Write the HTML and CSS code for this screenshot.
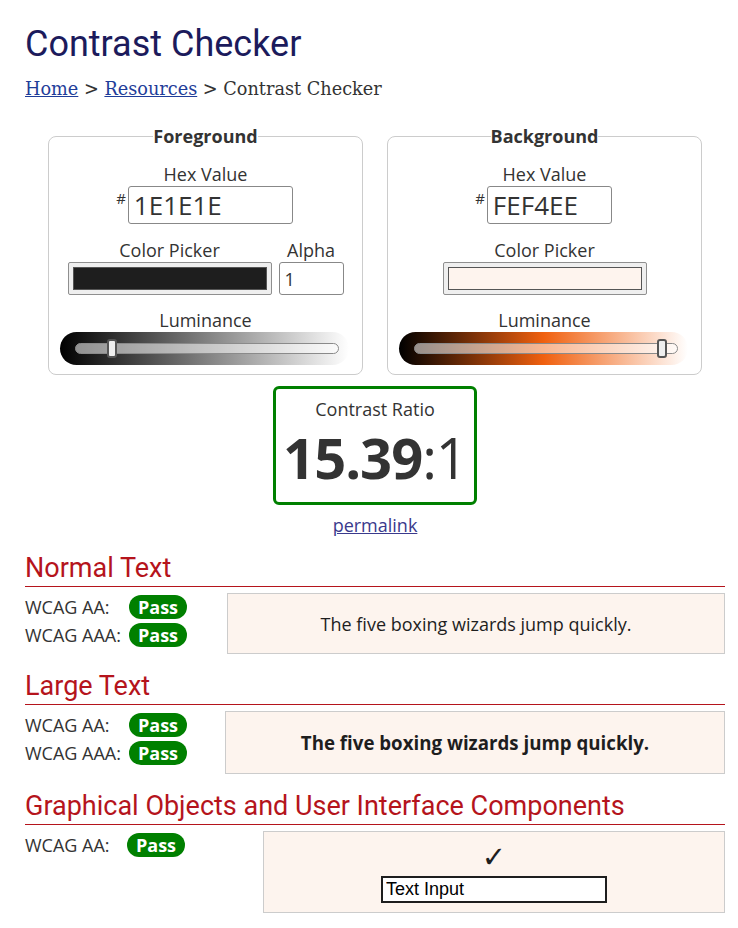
FILE: index.html
```html
<!DOCTYPE html>
<html lang="en">
<head>
<meta charset="utf-8">
<title>Contrast Checker</title>
<link rel="stylesheet" href="styles.css">
</head>
<body>
<main class="page">
  <h1 class="title">Contrast Checker</h1>
  <nav class="crumbs"><a href="#">Home</a> &gt; <a href="#">Resources</a> &gt; Contrast Checker</nav>

  <div class="pickers">
    <fieldset class="panel">
      <legend>Foreground</legend>
      <div class="lbl">Hex Value</div>
      <div class="hexrow"><span class="hash">#</span><input class="hex hex-fg" type="text" value="1E1E1E"></div>
      <div class="pickrow">
        <div class="col">
          <div class="lbl">Color Picker</div>
          <div class="swatch"><span class="swatch-in swatch-fg"></span></div>
        </div>
        <div class="col">
          <div class="lbl">Alpha</div>
          <input class="alpha" type="text" value="1">
        </div>
      </div>
      <div class="lbl">Luminance</div>
      <div class="lum lum-fg">
        <div class="track"><span class="thumb" style="left: 12%"></span></div>
      </div>
    </fieldset>

    <fieldset class="panel">
      <legend>Background</legend>
      <div class="lbl">Hex Value</div>
      <div class="hexrow"><span class="hash">#</span><input class="hex hex-bg" type="text" value="FEF4EE"></div>
      <div class="pickrow">
        <div class="col">
          <div class="lbl">Color Picker</div>
          <div class="swatch"><span class="swatch-in swatch-bg"></span></div>
        </div>
      </div>
      <div class="lbl">Luminance</div>
      <div class="lum lum-bg">
        <div class="track"><span class="thumb" style="left: 92.5%"></span></div>
      </div>
    </fieldset>
  </div>

  <div class="ratio-wrap">
    <div class="ratio">
      <div class="ratio-lbl">Contrast Ratio</div>
      <div class="ratio-val"><b>15.39</b>:1</div>
    </div>
    <a class="permalink" href="#">permalink</a>
  </div>

  <section class="result res-normal">
    <h2>Normal Text</h2>
    <div class="res-grid">
      <div class="checks">
        <div class="check"><span class="clabel">WCAG AA:</span><span class="pass">Pass</span></div>
        <div class="check"><span class="clabel">WCAG AAA:</span><span class="pass">Pass</span></div>
      </div>
      <div class="sample">The five boxing wizards jump quickly.</div>
    </div>
  </section>

  <section class="result res-large">
    <h2>Large Text</h2>
    <div class="res-grid">
      <div class="checks">
        <div class="check"><span class="clabel">WCAG AA:</span><span class="pass">Pass</span></div>
        <div class="check"><span class="clabel">WCAG AAA:</span><span class="pass">Pass</span></div>
      </div>
      <div class="sample sample-large">The five boxing wizards jump quickly.</div>
    </div>
  </section>

  <section class="result res-ui">
    <h2>Graphical Objects and User Interface Components</h2>
    <div class="res-grid">
      <div class="checks">
        <div class="check"><span class="clabel clabel-ui">WCAG AA:</span><span class="pass">Pass</span></div>
      </div>
      <div class="sample sample-ui">
        <span class="tick">&#10003;</span>
        <input class="demo-input" type="text" value="Text Input">
      </div>
    </div>
  </section>
</main>
</body>
</html>
```

FILE: styles.css
```css
* { box-sizing: border-box; }

body {
  margin: 0;
  background: #fff;
  color: #333;
  font-family: "Open Sans", "DejaVu Sans", sans-serif;
  font-size: 18px;
}

.page {
  width: 700px;
  margin-left: 25px;
  padding-top: 22px;
}

.title {
  margin: 0;
  font-family: Roboto, "Liberation Sans", sans-serif;
  font-weight: 400;
  font-size: 36px;
  line-height: 44px;
  color: #1c1b5c;
}

.crumbs {
  margin-top: 12px;
  font-family: "DejaVu Serif", "Liberation Serif", serif;
  font-size: 17.7px;
  line-height: 22px;
  color: #333;
}
.crumbs a { color: #1f3d99; }

.pickers {
  display: flex;
  justify-content: center;
  gap: 24px;
  margin-top: 25px;
}

.panel {
  width: 315px;
  margin: 0;
  padding: 14px 10px 9px;
  border: 1px solid #ccc;
  border-radius: 8px;
  display: flex;
  flex-direction: column;
  align-items: center;
  min-width: 0;
}
.panel legend {
  margin: 0 auto;
  padding: 0;
  font-weight: 700;
  font-size: 18px;
  line-height: 23px;
  color: #333;
}

.lbl {
  text-align: center;
  line-height: 24px;
  color: #333;
}

.hexrow {
  display: flex;
  align-items: flex-start;
  gap: 2px;
  margin-bottom: 14px;
}
.hash {
  font-size: 15px;
  line-height: 15px;
  padding-top: 5px;
  margin-left: -2px;
}
.hex {
  height: 38px;
  border: 1px solid #888;
  border-radius: 3px;
  padding: 0 5px;
  font-family: "Open Sans", sans-serif;
  font-size: 26px;
  color: #333;
  background: #fff;
}
.hex-fg { width: 165px; }
.hex-bg { width: 125px; }

.pickrow {
  display: flex;
  gap: 7px;
  margin-bottom: 13px;
}
.col {
  display: flex;
  flex-direction: column;
  align-items: center;
}

.swatch {
  width: 204px;
  height: 33px;
  padding: 4px 4px;
  background: #efefef;
  border: 1px solid #8f8f8f;
  border-radius: 2px;
  display: flex;
}
.swatch-in {
  flex: 1;
  border: 1px solid #555;
}
.swatch-fg { background: #1e1e1e; }
.swatch-bg { background: #fef4ee; }

.alpha {
  width: 65px;
  height: 33px;
  border: 1px solid #888;
  border-radius: 3px;
  padding: 0 5px;
  font-family: "Open Sans", sans-serif;
  font-size: 18px;
  color: #333;
  background: #fff;
}

.lum {
  width: 289px;
  height: 33px;
  border-radius: 17px;
  padding: 0 10px 0 15px;
  display: flex;
  align-items: center;
  margin-left: -2px;
}
.lum-fg { background: linear-gradient(to right, #000 0%, #fff 100%); }
.lum-bg { background: linear-gradient(to right, #000 0%, #f0600f 50%, #fff 100%); }

.track {
  position: relative;
  flex: 1;
  height: 11px;
  border: 1px solid #8a8a8a;
  border-radius: 6px;
  background: rgba(255, 255, 255, 0.55);
}
.thumb {
  position: absolute;
  top: -5px;
  width: 10px;
  height: 19px;
  background: #eee;
  border: 2px solid #555;
  border-radius: 3px;
}

.ratio-wrap {
  display: flex;
  flex-direction: column;
  align-items: center;
  margin-top: 11px;
}
.ratio {
  width: 204px;
  height: 119px;
  border: 3px solid #008000;
  border-radius: 6px;
  text-align: center;
  padding-top: 8px;
}
.ratio-lbl { line-height: 24px; }
.ratio-val {
  font-size: 56px;
  line-height: 64px;
  font-weight: 400;
  color: #333;
  letter-spacing: -1px;
  margin-top: 4px;
}
.ratio-val b { font-weight: 700; }

.permalink {
  margin-top: 8px;
  line-height: 24px;
  color: #3a3a8c;
}

.result { margin-top: 15px; }
.res-large { margin-top: 16px; }
.res-ui { margin-top: 16px; }

.result h2 {
  margin: 0;
  font-family: Roboto, "Liberation Sans", sans-serif;
  font-weight: 400;
  font-size: 27px;
  line-height: 32px;
  padding-bottom: 2px;
  color: #b5141c;
  border-bottom: 1px solid #b5141c;
}

.res-grid {
  display: grid;
  margin-top: 6px;
}
.res-normal .res-grid { grid-template-columns: 202px 1fr; }
.res-large .res-grid { grid-template-columns: 200px 1fr; }
.res-ui .res-grid { grid-template-columns: 238px 1fr; }

.check {
  display: flex;
  align-items: center;
  height: 28px;
}
.clabel { width: 104px; line-height: 24px; }
.clabel-ui { width: 102px; }

.pass {
  display: inline-block;
  width: 58px;
  height: 24px;
  line-height: 24px;
  border-radius: 12px;
  background: #008000;
  color: #fff;
  font-weight: 700;
  text-align: center;
}

.sample {
  height: 61px;
  background: #fdf4ee;
  border: 1px solid #ccc;
  color: #1e1e1e;
  display: flex;
  align-items: center;
  justify-content: center;
}
.sample-large {
  height: 63px;
  font-weight: 700;
  font-size: 18.7px;
}
.sample-ui {
  height: 82px;
  flex-direction: column;
  justify-content: flex-start;
  padding-top: 10px;
}
.tick {
  font-family: "DejaVu Sans", sans-serif;
  font-size: 29px;
  line-height: 30px;
  font-weight: 700;
}
.demo-input {
  margin-top: 4px;
  width: 226px;
  height: 27px;
  border: 2px solid #1e1e1e;
  padding: 0 3px;
  background: #fff;
  font-family: "Liberation Sans", Arial, sans-serif;
  font-size: 18px;
  color: #000;
}
```
